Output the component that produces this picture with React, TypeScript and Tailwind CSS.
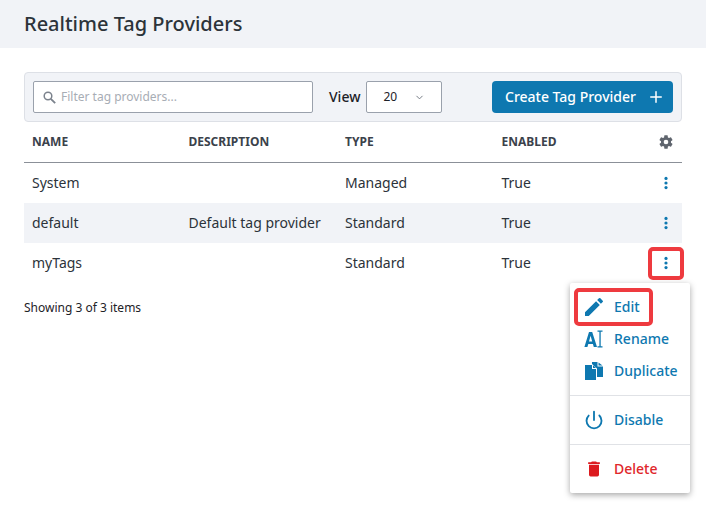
import { ChevronDown, Plus, Power } from "lucide-react";

const rows = [
  { name: "System", desc: "", type: "Managed", enabled: "True", bg: "" },
  { name: "default", desc: "Default tag provider", type: "Standard", enabled: "True", bg: "bg-[#f1f3f7]" },
  { name: "myTags", desc: "", type: "Standard", enabled: "True", bg: "" },
];

function Dots() {
  return (
    <svg width="4" height="14" viewBox="0 0 4 14" fill="#0e78b0">
      <circle cx="2" cy="2.400" r="1.600" />
      <circle cx="2" cy="7" r="1.600" />
      <circle cx="2" cy="11.600" r="1.600" />
    </svg>
  );
}

function MenuItem({ icon, label, color = "text-[#0e78b0]" }: { icon: React.ReactNode; label: string; color?: string }) {
  return (
    <div className={`flex items-center h-8 pl-[14px] text-sm font-medium ${color}`}>
      <span className="w-[20px] h-[24px] flex items-center justify-center">{icon}</span>
      <span className="ml-[10px]">{label}</span>
    </div>
  );
}

export default function App() {
  return (
    <div className="relative w-[706px] h-[505px] bg-white overflow-hidden font-['Noto_Sans',sans-serif] text-[#2c333a] text-sm">
      <div className="h-12 bg-[#f1f3f7] flex items-center px-6">
        <h1 className="text-xl font-medium text-[#2c333a]">Realtime Tag Providers</h1>
      </div>
      <div className="px-6 pt-6">
        <div className="h-[50px] bg-[#f1f3f7] border border-[#dde0e6] rounded flex items-center pl-2 pr-2">
          <div className="w-[280px] h-8 bg-white border border-[#9aa1ac] rounded-[2px] flex items-center pl-[9px] gap-[5px]">
            <svg width="13" height="13" viewBox="0 0 13 13" fill="none" stroke="#7b828c" strokeWidth="1.500">
              <circle cx="5" cy="5" r="3.800" />
              <path d="M7.800 7.800L12.200 12.200" strokeWidth="1.800" />
            </svg>
            <span className="text-xs text-[#a8adb5]">Filter tag providers...</span>
          </div>
          <span className="ml-4 font-medium text-[#1d2228]">View</span>
          <div className="ml-[6px] w-[76px] h-8 bg-white border border-[#9aa1ac] rounded-[2px] flex items-center pl-4 pr-4 justify-between text-xs text-[#1d2228]">
            <span>20</span>
            <ChevronDown size={11} className="text-[#6b727c]" />
          </div>
          <div className="ml-auto w-[181px] h-8 bg-[#0e78b0] rounded flex items-center pl-[13px] gap-[11px] text-white font-medium">
            <span>Create Tag Provider</span>
            <Plus size={18} strokeWidth={2} />
          </div>
        </div>
        <div className="grid grid-cols-[156.5px_156.5px_156.5px_1fr] h-[41px] items-center pl-2 pr-2 border-b border-[#8b9098] text-xs font-bold text-[#3b424b]">
          <span>NAME</span>
          <span>DESCRIPTION</span>
          <span>TYPE</span>
          <div className="flex items-center justify-between">
            <span>ENABLED</span>
            <svg width="16" height="16" viewBox="0 0 24 24" fill="#5f656e">
              <path d="M19.430 12.980c.04-.32.07-.64.07-.98s-.03-.66-.07-.98l2.110-1.650a.5.500 0 0 0 .12-.64l-2-3.460a.5.500 0 0 0-.61-.22l-2.490 1a7.300 7.300 0 0 0-1.690-.98l-.38-2.650A.49.490 0 0 0 14 2h-4a.49.490 0 0 0-.49.42l-.38 2.650c-.61.25-1.170.59-1.690.98l-2.490-1a.5.500 0 0 0-.61.22l-2 3.460a.49.490 0 0 0 .12.64l2.110 1.650c-.04.32-.07.65-.07.98s.03.66.07.98l-2.110 1.650a.5.500 0 0 0-.12.64l2 3.460c.12.22.39.3.61.22l2.490-1c.52.4 1.080.73 1.690.98l.38 2.650c.03.24.24.42.49.42h4c.25 0 .46-.18.49-.42l.38-2.650c.61-.25 1.170-.59 1.690-.98l2.490 1c.23.09.49 0 .61-.22l2-3.460a.5.500 0 0 0-.12-.64l-2.110-1.650zM12 15.500a3.500 3.500 0 1 1 0-7 3.500 3.500 0 0 1 0 7z" />
            </svg>
          </div>
        </div>
        {rows.map((r) => (
          <div key={r.name} className={`grid grid-cols-[156.5px_156.5px_156.5px_1fr] h-10 items-center pl-2 pr-2 ${r.bg}`}>
            <span>{r.name}</span>
            <span>{r.desc}</span>
            <span>{r.type}</span>
            <div className="flex items-center justify-between">
              <span>{r.enabled}</span>
              <span className="mr-[6px] flex"><Dots /></span>
            </div>
          </div>
        ))}
        <div className="mt-[17px] text-xs leading-4 text-[#1d2228]">Showing 3 of 3 items</div>
      </div>

      <div className="absolute left-[570px] top-[283px] w-[120px] h-[210px] bg-white rounded-[2px] shadow-[0_2px_6px_rgba(0,0,0,0.35)] pt-2">
        <MenuItem
          label="Edit"
          icon={
            <svg width="24" height="24" viewBox="0 0 24 24" fill="#0e78b0" className="shrink-0">
              <path d="M3 17.250V21h3.750L17.810 9.940l-3.750-3.750L3 17.250zM20.710 7.040a1 1 0 0 0 0-1.410l-2.340-2.340a1 1 0 0 0-1.410 0l-1.830 1.830 3.750 3.750 1.830-1.830z" />
            </svg>
          }
        />
        <MenuItem
          label="Rename"
          icon={
            <svg width="20" height="20" viewBox="0 0 20 20" fill="#0e78b0">
              <path d="M5 3h3.200L13 18h-3.200l-.9-3H4.300l-.9 3H.4L5 3zm0 9.400h3.200L6.600 6.700 5 12.400z" />
              <path d="M13.500 1.500h5v1.300h-1.800v14.400h1.800v1.300h-5v-1.300h1.900V2.800h-1.900z" />
            </svg>
          }
        />
        <MenuItem
          label="Duplicate"
          icon={
            <svg width="20" height="20" viewBox="0 0 20 20" fill="#0e78b0">
              <path fillRule="evenodd" d="M8 1h5.500v4.500H19V16h-6V7.500L8 3V1zM14.500 1.500L18.500 4.500h-4V1.500z" />
              <path d="M1 4h7v4h4v11H1V4z" />
              <path d="M9 4.200L12 7h-3V4.200z" />
            </svg>
          }
        />
        <div className="border-t border-[#e0e2e6] mt-2 mb-2" />
        <MenuItem label="Disable" icon={<Power size={20} strokeWidth={2.200} className="text-[#0e78b0]" />} />
        <div className="border-t border-[#e0e2e6] mt-2 mb-2" />
        <MenuItem
          label="Delete"
          color="text-[#e0272b]"
          icon={
            <svg width="20" height="20" viewBox="0 0 24 24" fill="#dc1a1f">
              <path d="M6 19a2 2 0 0 0 2 2h8a2 2 0 0 0 2-2V7H6v12zM19 4h-3.500l-1-1h-5l-1 1H5v2h14V4z" />
            </svg>
          }
        />
      </div>

      <div className="absolute left-[648px] top-[247px] w-[36px] h-[33px] border-[4px] border-[#ee3a3f] rounded-[5px]" />
      <div className="absolute left-[574px] top-[288px] w-[79px] h-[38px] border-[4px] border-[#ee3a3f] rounded-[5px]" />
    </div>
  );
}
